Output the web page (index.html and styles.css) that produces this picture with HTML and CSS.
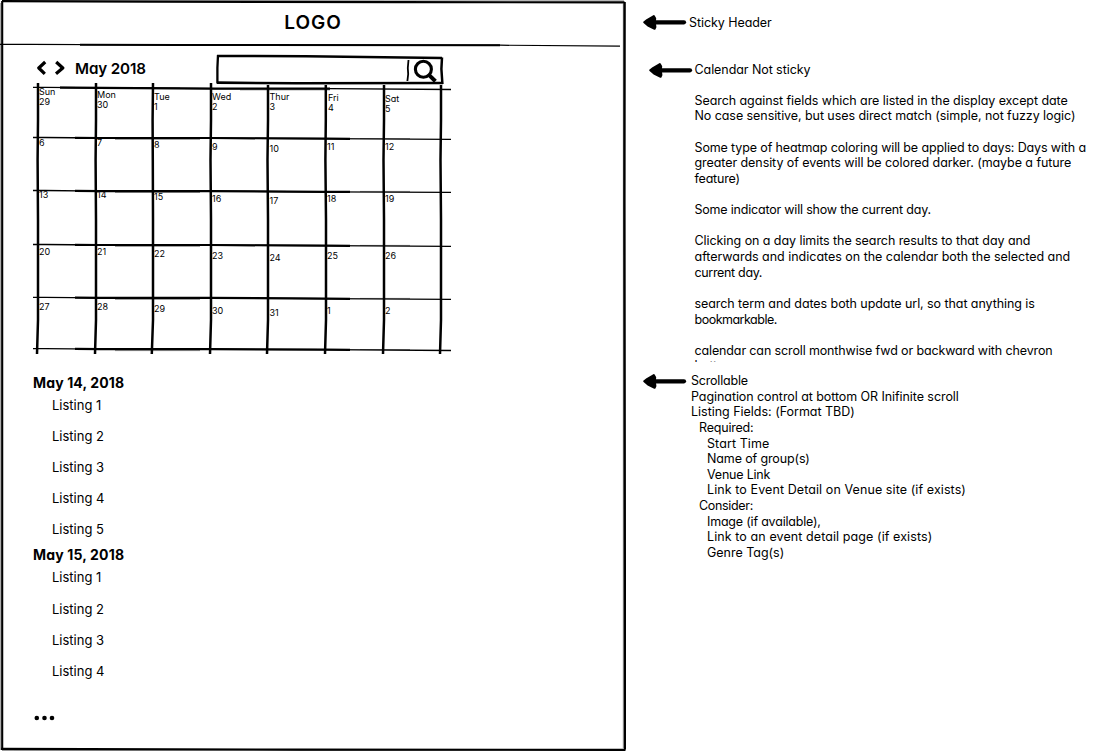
FILE: index.html
```html
<!DOCTYPE html>
<html lang="en">
<head>
<meta charset="utf-8">
<title>Event calendar wireframe</title>
<link rel="stylesheet" href="styles.css">
</head>
<body>
<div class="board">
  <main class="frame">
    <svg class="frame-ink" width="626" height="752" viewBox="0 0 626 752">
      <path class="tint" d="M2 0.8H624M0.7 3V750M2 750.5H625M623.3 4V748"/>
      <path d="M2 1.2L150 1.6L400 2.2L624.5 2.3" stroke-width="2.2"/>
      <path d="M2.2 1V749" stroke-width="2.1"/>
      <path d="M624.6 2L624.4 200L625 749.5" stroke-width="2.4"/>
      <path d="M1 748.8L300 749.6L625.5 749.8" stroke-width="2.2"/>
      <path d="M0 44.4H30L180 45L500 45.2L620 46.2" stroke-width="1.2"/>
      <path d="M80 44.8L180 45L500 45.2" stroke-width="1.9"/>
    </svg>
    <header class="site-header"><span class="logo">LOGO</span></header>
    <section class="toolbar">
      <svg class="chevrons" width="30" height="16" viewBox="0 0 30 16"><path d="M10.2 2L3.8 8L9.8 13.8M21.2 2L27.8 8L21 13.8"/></svg>
      <h1 class="month">May 2018</h1>
      <div class="search">
        <svg width="228" height="31" viewBox="0 0 228 31">
          <path d="M1 1.9L90 2.2L226 4" stroke-width="2.5"/>
          <path d="M2 1L1.4 14L1.4 29.5" stroke-width="2.3"/>
          <path d="M1 28.6L80 29.3L227 29" stroke-width="2.6"/>
          <path d="M226 3.5L225.4 15L226.4 30" stroke-width="2.5"/>
          <path d="M192.5 6L191.8 14L192.2 20L191.4 27" stroke-width="1.8"/>
          <circle cx="207.4" cy="15.3" r="8" stroke-width="3.1"/>
          <path d="M213.4 21.4L219.4 27.2" stroke-width="4"/>
        </svg>
      </div>
    </section>
    <section class="calendar">
      <svg class="cal-ink" width="420" height="276" viewBox="33 81 420 276">
        <path class="tint" d="M60 87.2L180 87.8M240 89.9H330M115 139.4H200M360 138.6H410M115 192.5H200M360 191.4H410M115 246.4H200M360 245.4H410M115 299.4H200M360 298.4H410M115 350.6H200M360 349.5H410"/>
        <g stroke-width="1.3">
          <path d="M33 87.4H45L215 88.6H330L451 89.5"/>
          <path d="M33 137.5H45L100 138H210L325 138.7L451 139.4"/>
          <path d="M33 190.5H45L100 191.1H210L325 191.8L451 192.4"/>
          <path d="M33 244.5H45L100 245H210L325 245.7L451 246.4"/>
          <path d="M33 297.4H45L100 297.9H210L325 298.6L451 299.4"/>
          <path d="M33 348.6H45L100 349.1H210L325 349.7L451 350.5"/>
        </g>
        <g stroke-width="2.2">
          <path d="M60 87.6L215 88.6H330"/>
          <path d="M75 137.8L100 138H210L325 138.7L350 138.8"/>
          <path d="M75 190.9L100 191.1H210L325 191.8L350 191.9"/>
          <path d="M75 244.8L100 245H210L325 245.7L350 245.8"/>
          <path d="M75 297.7L100 297.9H210L325 298.6L350 298.8"/>
          <path d="M75 348.9L100 349.1H210L325 349.7L350 349.8"/>
        </g>
        <g stroke-width="2.5">
          <path d="M38 83V120L37.6 160L38 220V320L37 354"/>
          <path d="M96 83V120L95.6 160L96 220V320L95 354"/>
          <path d="M153 83L152.6 120L152.8 160L153 220V320L151.8 354"/>
          <path d="M211 83V120L210.5 160L211 220V320L210 354"/>
          <path d="M268 85V120L267.5 160L268 220V320L267 354"/>
          <path d="M325.8 85V120L325.4 160L326 220V320L325 354"/>
          <path d="M384 85V120L383.5 160L384 220V320L383 354"/>
          <path d="M441 85V120L440.5 160L441 220V320L440 354"/>
        </g>
      </svg>
      <div class="grid">
        <div class="day c1">Sun<br>29</div><div class="day c2 h2">Mon<br>30</div><div class="day c3 h3">Tue<br>1</div><div class="day c4 h4">Wed<br>2</div><div class="day c5 h4">Thur<br>3</div><div class="day c6 h6">Fri<br>4</div><div class="day c7 h7">Sat<br>5</div>
        <div class="day c1">6</div><div class="day c2">7</div><div class="day c3">8</div><div class="day c4">9</div><div class="day c5">10</div><div class="day c6">11</div><div class="day c7">12</div>
        <div class="day c1">13</div><div class="day c2">14</div><div class="day c3">15</div><div class="day c4">16</div><div class="day c5">17</div><div class="day c6">18</div><div class="day c7">19</div>
        <div class="day c1">20</div><div class="day c2">21</div><div class="day c3">22</div><div class="day c4">23</div><div class="day c5">24</div><div class="day c6">25</div><div class="day c7">26</div>
        <div class="day c1">27</div><div class="day c2">28</div><div class="day c3">29</div><div class="day c4">30</div><div class="day c5">31</div><div class="day c6">1</div><div class="day c7">2</div>
      </div>
    </section>
    <section class="listings">
      <h2>May 14, 2018</h2>
      <ul><li>Listing 1</li><li>Listing 2</li><li>Listing 3</li><li>Listing 4</li><li>Listing 5</li></ul>
      <h2 class="open">May 15, 2018</h2>
      <ul><li>Listing 1</li><li>Listing 2</li><li>Listing 3</li><li>Listing 4</li></ul>
      <svg class="more" width="24" height="8" viewBox="0 0 24 8"><circle cx="3.8" cy="4" r="2.3"/><circle cx="11.5" cy="4" r="2.3"/><circle cx="19" cy="4" r="2.3"/></svg>
    </section>
  </main>
  <aside class="notes">
    <section class="note note-header">
      <svg class="arrow" width="45" height="17" viewBox="0 0 45 17"><path class="head" d="M2.2 8.2L5 6L11.8 2L13.2 4.5L12.8 8.5L13.4 13L12.6 14.8L6 11.5Z"/><path class="shaft" d="M12 8.3H42"/></svg>
      <div class="text"><p>Sticky Header</p></div>
    </section>
    <section class="note note-calendar">
      <svg class="arrow" width="45" height="17" viewBox="0 0 45 17"><path class="head" d="M2.2 8.2L5 6L11.8 2L13.2 4.5L12.8 8.5L13.4 13L12.6 14.8L6 11.5Z"/><path class="shaft" d="M12 8.3H42"/></svg>
      <div class="text">
        <p>Calendar Not sticky</p><br>
        <p>Search against fields which are listed in the display except date</p>
        <p>No case sensitive, but uses direct match (simple, not fuzzy logic)</p><br>
        <p class="snug">Some type of heatmap coloring will be applied to days: Days with a</p>
        <p>greater density of events will be colored darker. (maybe a future</p>
        <p class="tight">feature)</p><br>
        <p class="tight">Some indicator will show the current day.</p><br>
        <p>Clicking on a day limits the search results to that day and</p>
        <p class="even">afterwards and indicates on the calendar both the selected and</p>
        <p class="tighter">current day.</p><br>
        <p>search term and dates both update url, so that anything is</p>
        <p class="tightest">bookmarkable.</p><br>
        <p class="snug">calendar can scroll monthwise fwd or backward with chevron</p>
        <p>buttons</p>
      </div>
    </section>
    <section class="note note-list">
      <svg class="arrow" width="45" height="17" viewBox="0 0 45 17"><path class="head" d="M2.2 8.2L5 6L11.8 2L13.2 4.5L12.8 8.5L13.4 13L12.6 14.8L6 11.5Z"/><path class="shaft" d="M12 8.3H42"/></svg>
      <div class="text">
        <p class="tight">Scrollable</p>
        <p>Pagination control at bottom OR Inifinite scroll</p>
        <p class="even">Listing Fields: (Format TBD)</p>
        <p class="in1 tight">Required:</p>
        <p class="in2 loose">Start Time</p>
        <p class="in2 snug">Name of group(s)</p>
        <p class="in2 tight">Venue Link</p>
        <p class="in2 loose">Link to Event Detail on Venue site (if exists)</p>
        <p class="in1 tighter">Consider:</p>
        <p class="in2 tight">Image (if available),</p>
        <p class="in2 loose">Link to an event detail page (if exists)</p>
        <p class="in2 even">Genre Tag(s)</p>
      </div>
    </section>
  </aside>
</div>
</body>
</html>
```
FILE: styles.css
```css
* { box-sizing: border-box; }
body { margin: 0; background: #fff; color: #000; font: 13px/15.64px Inter, "Liberation Sans", sans-serif; font-feature-settings: "cv11"; }
h1, h2, p, ul { margin: 0; padding: 0; }
li { list-style: none; }
svg { display: block; flex: none; fill: none; stroke: #000; stroke-linejoin: round; }
.tint { stroke: #999; stroke-width: 1; }

.board { display: flex; width: 1096px; height: 752px; overflow: hidden; }
.frame { position: relative; flex: none; width: 626px; height: 752px; }
.frame-ink { position: absolute; inset: 0; }

.site-header { display: flex; justify-content: center; height: 46px; padding-top: 11px; }
.logo { font-size: 19px; line-height: 23px; font-weight: 600; letter-spacing: 0.96px; }

.toolbar { display: flex; height: 37px; padding: 8px 0 0 35px; }
.chevrons { margin-top: 6px; stroke-width: 3.2; }
.month { width: 141px; margin: 5px 0 0 10px; font-size: 15.2px; line-height: 19px; font-weight: 600; letter-spacing: -0.12px; white-space: nowrap; }
.search { width: 228px; }

.calendar { position: relative; height: 289px; padding: 4px 0 0 38px; }
.cal-ink { position: absolute; left: 33px; top: -2px; }
.grid { position: relative; display: grid; grid-template-columns: 58px 57px 58px 57px 58px 58px 57px; grid-template-rows: 51px 52px 57px 55px 52px; font-size: 9px; line-height: 10.4px; }
.day { padding-left: 1px; }
.c3 { padding-top: 2px; }
.c4 { padding-top: 3.5px; }
.c5 { padding-top: 5.5px; padding-left: 1.5px; }
.c6, .c7 { padding-top: 3.5px; }
.h2 { padding-top: 3px; }
.h3, .h4 { padding-top: 5px; }
.h6 { padding-top: 6px; padding-left: 2px; }
.h7 { padding-top: 7px; }

.listings { padding: 1.5px 0 0 33px; }
.listings h2 { height: 17px; font-size: 14px; line-height: 17px; font-weight: 700; letter-spacing: 0.13px; white-space: nowrap; }
.listings h2.open { letter-spacing: 0.16px; }
.listings ul { padding: 7px 0 0 19px; }
.listings li { height: 31.2px; }
.listings li:last-child { height: 24.2px; }
.more { margin-top: 25.5px; fill: #000; stroke: none; }

.notes { flex: none; width: 470px; font-size: 12.5px; letter-spacing: -0.07px; }
.note { display: flex; white-space: nowrap; }
.text p { height: 15.64px; }
.note-header { height: 61px; padding: 15px 0 0 16px; }
.note-header .arrow { margin-top: -1.2px; }
.note-header .text { padding-left: 2px; }
.note-calendar { height: 301px; padding: 0.5px 0 0 22px; overflow: hidden; }
.note-calendar .arrow { margin-top: 0.2px; }
.note-calendar .text { padding-left: 1.5px; }
.note-list { height: 199px; padding: 11px 0 0 16px; }
.note-list .text { padding-left: 4px; }
.arrow .head { fill: #000; stroke-width: 2; }
.arrow .shaft { stroke-width: 4.2; stroke-linecap: round; }
.in1 { padding-left: 8px; }
.in2 { padding-left: 16px; }
.loose { letter-spacing: 0.09px; }
.even { letter-spacing: -0.02px; }
.snug { letter-spacing: -0.13px; }
.tight { letter-spacing: -0.2px; }
.tighter { letter-spacing: -0.33px; }
.tightest { letter-spacing: -0.5px; }
```
